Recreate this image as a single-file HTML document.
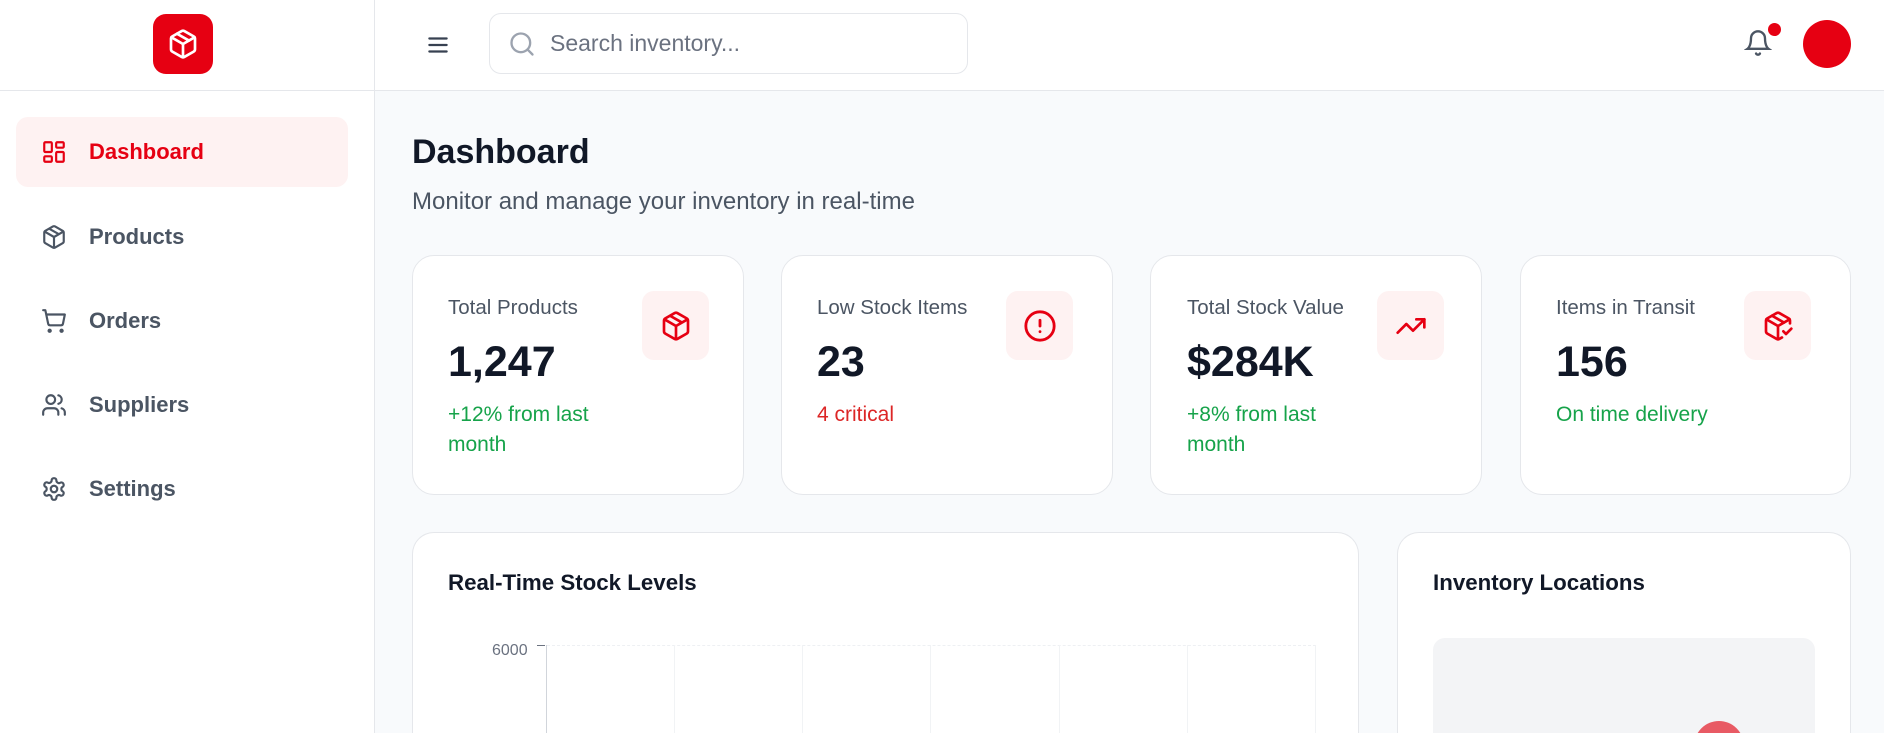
<!DOCTYPE html>
<html style="width:1884px;height:733px;overflow:hidden"><head><meta charset="utf-8"><style>
*{box-sizing:border-box;margin:0;padding:0}
body{width:1884px;height:733px;overflow:hidden;background:#f8fafc;font-family:"Liberation Sans",sans-serif;position:relative}
.abs{position:absolute}
.side{left:0;top:0;width:375px;height:733px;background:#fff;border-right:1px solid #e5e7eb}
.hdr{left:375px;top:0;width:1509px;height:91px;background:#fff;border-bottom:1px solid #e5e7eb}
.sidehdr{left:0;top:90px;width:375px;height:1px;background:#e5e7eb}
.nav{left:16px;width:332px;height:70px;border-radius:12px;display:flex;align-items:center;padding-left:25px;font-size:22px;color:#4b5563;font-weight:bold}
.nav svg{margin-right:22px}
.card{background:#fff;border:1px solid #e5e7eb;border-radius:22px}
.lbl{font-size:20.5px;color:#4b5563}
.val{font-size:43px;color:#111827;font-weight:bold}
.sub{font-size:21px;line-height:30px}
.ib{width:67px;height:69px;border-radius:12px;background:#fef2f2;display:flex;align-items:center;justify-content:center}
</style></head><body>
<div class="abs side"></div>
<div class="abs hdr"></div>
<div class="abs sidehdr"></div>
<div class="abs" style="left:153px;top:14px;width:60px;height:60px;border-radius:13px;background:#e60012;display:flex;align-items:center;justify-content:center">
<svg width="32" height="32" viewBox="0 0 24 24" fill="none" stroke="#fff" stroke-width="2" stroke-linecap="round" stroke-linejoin="round"><path d="M11 21.7a2 2 0 0 0 2 0l7-4A2 2 0 0 0 21 16V8a2 2 0 0 0-1-1.7l-7-4a2 2 0 0 0-2 0l-7 4A2 2 0 0 0 3 8v8a2 2 0 0 0 1 1.7z"/><path d="M12 22V12"/><path d="M3.3 7 12 12l8.7-5"/><path d="m7.5 4.3 9 5.1"/></svg></div>
<div class="abs nav" style="top:117px;background:#fef2f2;color:#e60012">
<svg width="26" height="26" viewBox="0 0 24 24" fill="none" stroke="#e60012" stroke-width="2"><rect x="3" y="3" width="7" height="9" rx="1"/><rect x="14" y="3" width="7" height="5" rx="1"/><rect x="14" y="12" width="7" height="9" rx="1"/><rect x="3" y="16" width="7" height="5" rx="1"/></svg>Dashboard</div>
<div class="abs nav" style="top:202px"><svg width="26" height="26" viewBox="0 0 24 24" fill="none" stroke="#4b5563" stroke-width="2" stroke-linejoin="round"><path d="M11 21.7a2 2 0 0 0 2 0l7-4A2 2 0 0 0 21 16V8a2 2 0 0 0-1-1.7l-7-4a2 2 0 0 0-2 0l-7 4A2 2 0 0 0 3 8v8a2 2 0 0 0 1 1.7z"/><path d="M12 22V12"/><path d="M3.3 7 12 12l8.7-5"/><path d="m7.5 4.3 9 5.1"/></svg>Products</div>
<div class="abs nav" style="top:286px"><svg width="26" height="26" viewBox="0 0 24 24" fill="none" stroke="#4b5563" stroke-width="2" stroke-linecap="round" stroke-linejoin="round"><circle cx="8" cy="21" r="1"/><circle cx="19" cy="21" r="1"/><path d="M2 2h2l2.6 12.4a2 2 0 0 0 2 1.6h9.7a2 2 0 0 0 2-1.6L22 6H5"/></svg>Orders</div>
<div class="abs nav" style="top:370px"><svg width="26" height="26" viewBox="0 0 24 24" fill="none" stroke="#4b5563" stroke-width="2" stroke-linecap="round"><path d="M16 21v-2a4 4 0 0 0-4-4H6a4 4 0 0 0-4 4v2"/><circle cx="9" cy="7" r="4"/><path d="M22 21v-2a4 4 0 0 0-3-3.9"/><path d="M16 3.1a4 4 0 0 1 0 7.8"/></svg>Suppliers</div>
<div class="abs nav" style="top:454px"><svg width="26" height="26" viewBox="0 0 24 24" fill="none" stroke="#4b5563" stroke-width="2"><path d="M12.2 2h-.4a2 2 0 0 0-2 2v.2a2 2 0 0 1-1 1.7l-.4.3a2 2 0 0 1-2 0l-.2-.1a2 2 0 0 0-2.7.7l-.2.4a2 2 0 0 0 .7 2.7l.2.1a2 2 0 0 1 1 1.7v.5a2 2 0 0 1-1 1.8l-.2.1a2 2 0 0 0-.7 2.7l.2.4a2 2 0 0 0 2.7.7l.2-.1a2 2 0 0 1 2 0l.4.3a2 2 0 0 1 1 1.7v.2a2 2 0 0 0 2 2h.4a2 2 0 0 0 2-2v-.2a2 2 0 0 1 1-1.7l.4-.3a2 2 0 0 1 2 0l.2.1a2 2 0 0 0 2.7-.7l.2-.4a2 2 0 0 0-.7-2.7l-.2-.1a2 2 0 0 1-1-1.7v-.5a2 2 0 0 1 1-1.7l.2-.1a2 2 0 0 0 .7-2.7l-.2-.4a2 2 0 0 0-2.7-.7l-.2.1a2 2 0 0 1-2 0l-.4-.3a2 2 0 0 1-1-1.7V4a2 2 0 0 0-2-2z"/><circle cx="12" cy="12" r="3"/></svg>Settings</div>

<svg class="abs" style="left:425px;top:32px" width="26" height="26" viewBox="0 0 24 24" fill="none" stroke="#374151" stroke-width="2" stroke-linecap="round"><path d="M4 6h16M4 12h16M4 18h16"/></svg>
<div class="abs" style="left:489px;top:13px;width:479px;height:61px;border:1px solid #e5e7eb;border-radius:12px;display:flex;align-items:center;padding-left:18px;font-size:23px;color:#6b7280">
<svg width="28" height="28" viewBox="0 0 24 24" fill="none" stroke="#9ca3af" stroke-width="2" stroke-linecap="round" style="margin-right:14px"><circle cx="11" cy="11" r="8"/><path d="m21 21-4.3-4.3"/></svg>Search inventory...</div>
<svg class="abs" style="left:1744px;top:28px" width="28" height="30" viewBox="0 0 24 24" fill="none" stroke="#4b5563" stroke-width="2" stroke-linecap="round"><path d="M6 8a6 6 0 0 1 12 0c0 7 3 9 3 9H3s3-2 3-9"/><path d="M10.3 21a1.9 1.9 0 0 0 3.4 0"/></svg>
<div class="abs" style="left:1768px;top:23px;width:13px;height:13px;border-radius:50%;background:#e60012"></div>
<div class="abs" style="left:1803px;top:20px;width:48px;height:48px;border-radius:50%;background:#e60012"></div>

<div class="abs" style="left:412px;top:133px;font-size:34px;font-weight:bold;color:#111827">Dashboard</div>
<div class="abs" style="left:412px;top:188px;font-size:24px;color:#4b5563">Monitor and manage your inventory in real-time</div>

<div class="abs card" style="left:412px;top:255px;width:332px;height:240px"></div>
<div class="abs card" style="left:781px;top:255px;width:332px;height:240px"></div>
<div class="abs card" style="left:1150px;top:255px;width:332px;height:240px"></div>
<div class="abs card" style="left:1520px;top:255px;width:331px;height:240px"></div>

<div class="abs lbl" style="left:448px;top:296px">Total Products</div>
<div class="abs val" style="left:448px;top:338px">1,247</div>
<div class="abs sub" style="left:448px;top:400px;color:#16a34a">+12% from last<br>month</div>
<div class="abs ib" style="left:642px;top:291px"><svg width="32" height="32" viewBox="0 0 24 24" fill="none" stroke="#e60012" stroke-width="2" stroke-linejoin="round"><path d="M11 21.7a2 2 0 0 0 2 0l7-4A2 2 0 0 0 21 16V8a2 2 0 0 0-1-1.7l-7-4a2 2 0 0 0-2 0l-7 4A2 2 0 0 0 3 8v8a2 2 0 0 0 1 1.7z"/><path d="M12 22V12"/><path d="M3.3 7 12 12l8.7-5"/><path d="m7.5 4.3 9 5.1"/></svg></div>

<div class="abs lbl" style="left:817px;top:296px">Low Stock Items</div>
<div class="abs val" style="left:817px;top:338px">23</div>
<div class="abs sub" style="left:817px;top:400px;color:#dc2626">4 critical</div>
<div class="abs ib" style="left:1006px;top:291px"><svg width="34" height="34" viewBox="0 0 24 24" fill="none" stroke="#e60012" stroke-width="2" stroke-linecap="round"><circle cx="12" cy="12" r="10"/><path d="M12 8v4M12 16h.01"/></svg></div>

<div class="abs lbl" style="left:1187px;top:296px">Total Stock Value</div>
<div class="abs val" style="left:1187px;top:338px">$284K</div>
<div class="abs sub" style="left:1187px;top:400px;color:#16a34a">+8% from last<br>month</div>
<div class="abs ib" style="left:1377px;top:291px"><svg width="32" height="32" viewBox="0 0 24 24" fill="none" stroke="#e60012" stroke-width="2" stroke-linecap="round" stroke-linejoin="round"><path d="M22 7 13.5 15.5 8.5 10.5 2 17"/><path d="M16 7h6v6"/></svg></div>

<div class="abs lbl" style="left:1556px;top:296px">Items in Transit</div>
<div class="abs val" style="left:1556px;top:338px">156</div>
<div class="abs sub" style="left:1556px;top:400px;color:#16a34a">On time delivery</div>
<div class="abs ib" style="left:1744px;top:291px"><svg width="32" height="32" viewBox="0 0 24 24" fill="none" stroke="#e60012" stroke-width="2" stroke-linecap="round" stroke-linejoin="round"><path d="m16 16 2 2 4-4"/><path d="M21 10V8a2 2 0 0 0-1-1.7l-7-4a2 2 0 0 0-2 0l-7 4A2 2 0 0 0 3 8v8a2 2 0 0 0 1 1.7l7 4a2 2 0 0 0 2 0l2-1.1"/><path d="M3.3 7 12 12l8.7-5"/><path d="M12 22V12"/><path d="m7.5 4.3 9 5.1"/></svg></div>

<div class="abs card" style="left:412px;top:532px;width:947px;height:201px;border-bottom:none;border-radius:22px 22px 0 0"></div>
<div class="abs card" style="left:1397px;top:532px;width:454px;height:201px;border-bottom:none;border-radius:22px 22px 0 0"></div>
<div class="abs" style="left:448px;top:570px;font-size:22.3px;font-weight:bold;color:#111827">Real-Time Stock Levels</div>
<div class="abs" style="left:1433px;top:570px;font-size:22.3px;font-weight:bold;color:#111827">Inventory Locations</div>
<div class="abs" style="left:492px;top:642px;font-size:16px;color:#6b7280">6000</div>
<div class="abs" style="left:537px;top:645px;width:8px;height:1px;background:#6b7280"></div>
<div class="abs" style="left:546px;top:645px;width:1px;height:88px;background:#d1d5db"></div>
<div class="abs" style="left:547px;top:645px;width:769px;height:1px;border-top:1px dashed #eef0f3"></div>
<div class="abs" style="left:674px;top:645px;width:1px;height:88px;background:#f1f3f5"></div>
<div class="abs" style="left:802px;top:645px;width:1px;height:88px;background:#f1f3f5"></div>
<div class="abs" style="left:930px;top:645px;width:1px;height:88px;background:#f1f3f5"></div>
<div class="abs" style="left:1059px;top:645px;width:1px;height:88px;background:#f1f3f5"></div>
<div class="abs" style="left:1187px;top:645px;width:1px;height:88px;background:#f1f3f5"></div>
<div class="abs" style="left:1315px;top:645px;width:1px;height:88px;background:#f1f3f5"></div>
<div class="abs" style="left:1433px;top:638px;width:382px;height:95px;border-radius:12px 12px 0 0;background:#f3f4f6;overflow:hidden">
<div class="abs" style="left:261px;top:83px;width:50px;height:50px;border-radius:50%;background:#e85a64"></div>
</div>
</body></html>
